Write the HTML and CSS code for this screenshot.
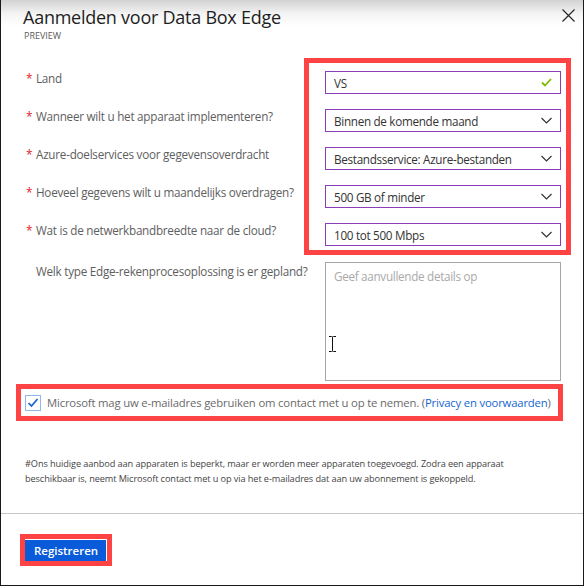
FILE: index.html
```html
<!DOCTYPE html>
<html lang="nl">
<head>
<meta charset="utf-8">
<title>Aanmelden voor Data Box Edge</title>
<link rel="stylesheet" href="styles.css">
</head>
<body>
<div class="panel">
  <header class="head">
    <div class="head-text">
      <h1 class="title">Aanmelden voor Data Box Edge</h1>
      <div class="sub">PREVIEW</div>
    </div>
    <button class="close" aria-label="Sluiten">
      <svg width="13" height="13" viewBox="0 0 13 13"><path d="M0.5 0.5L12.5 12.5M12.5 0.5L0.5 12.5" stroke="#222" stroke-width="1.1" fill="none"/></svg>
    </button>
  </header>

  <main class="content">
    <div class="top-form">
      <div class="labels">
        <div class="lbl"><span class="req">*</span>Land</div>
        <div class="lbl"><span class="req">*</span>Wanneer wilt u het apparaat implementeren?</div>
        <div class="lbl"><span class="req">*</span>Azure-doelservices voor gegevensoverdracht</div>
        <div class="lbl"><span class="req">*</span>Hoeveel gegevens wilt u maandelijks overdragen?</div>
        <div class="lbl"><span class="req">*</span>Wat is de netwerkbandbreedte naar de cloud?</div>
      </div>
      <div class="hl fields">
        <div class="field"><span>VS</span>
          <svg class="ico" width="11" height="9" viewBox="0 0 11 9"><path d="M1 4.5L4 7.5L10 1" stroke="#7fba00" stroke-width="1.8" fill="none"/></svg>
        </div>
        <div class="field"><span>Binnen de komende maand</span>
          <svg class="ico" width="11" height="7" viewBox="0 0 11 7"><path d="M0.5 1L5.5 6L10.5 1" stroke="#333" stroke-width="1.2" fill="none"/></svg>
        </div>
        <div class="field"><span>Bestandsservice: Azure-bestanden</span>
          <svg class="ico" width="11" height="7" viewBox="0 0 11 7"><path d="M0.5 1L5.5 6L10.5 1" stroke="#333" stroke-width="1.2" fill="none"/></svg>
        </div>
        <div class="field"><span>500 GB of minder</span>
          <svg class="ico" width="11" height="7" viewBox="0 0 11 7"><path d="M0.5 1L5.5 6L10.5 1" stroke="#333" stroke-width="1.2" fill="none"/></svg>
        </div>
        <div class="field"><span>100 tot 500 Mbps</span>
          <svg class="ico" width="11" height="7" viewBox="0 0 11 7"><path d="M0.5 1L5.5 6L10.5 1" stroke="#333" stroke-width="1.2" fill="none"/></svg>
        </div>
      </div>
    </div>

    <div class="ta-row">
      <div class="lbl plain">Welk type Edge-rekenprocesoplossing is er gepland?</div>
      <div class="ta">
        <span class="placeholder">Geef aanvullende details op</span>
        <svg class="cursor" width="7" height="16" viewBox="0 0 7 16"><path d="M0 0.5H2.5Q3.5 0.5 3.5 1.5V14.5Q3.5 15.5 2.5 15.5H0M7 0.5H4.5Q3.5 0.5 3.5 1.5M3.5 14.5Q3.5 15.5 4.5 15.5H7" stroke="#111" stroke-width="1" fill="none"/></svg>
      </div>
    </div>

    <div class="hl consent">
      <svg class="cb" width="16" height="16" viewBox="0 0 16 16"><rect x="0.5" y="0.5" width="15" height="15" fill="#fff" stroke="#1a73d9" stroke-width="1" stroke-dasharray="1 1"/><path d="M3.5 8L6.5 11L12.5 4" stroke="#1463d0" stroke-width="1.7" fill="none"/></svg>
      <span class="consent-text">Microsoft mag uw e-mailadres gebruiken om contact met u op te nemen. (<a class="link" href="#">Privacy en voorwaarden</a>)</span>
    </div>

    <p class="note">#Ons huidige aanbod aan apparaten is beperkt, maar er worden meer apparaten toegevoegd. Zodra een apparaat beschikbaar is, neemt Microsoft contact met u op via het e-mailadres dat aan uw abonnement is gekoppeld.</p>
  </main>

  <footer class="foot">
    <span class="hl btn-hl"><button class="btn">Registreren</button></span>
  </footer>
</div>
</body>
</html>
```

FILE: styles.css
```css
* { box-sizing: border-box; }
html, body { margin: 0; padding: 0; background: #fff; }
body { font-family: "Open Sans", "Noto Sans", sans-serif; color: #333; }

.panel {
  width: 584px;
  height: 586px;
  border: 1px solid #1a1a1a;
  border-top: none;
  display: flex;
  flex-direction: column;
  background: #fff;
}

.head {
  display: flex;
  justify-content: space-between;
  align-items: flex-start;
  padding: 5px 8px 0 22px;
  height: 58px;
  background: linear-gradient(to bottom, #d2d2d2 0px, #f4f4f4 14px, #ffffff 26px);
}
.title {
  margin: 0;
  font-size: 18px;
  font-weight: 400;
  line-height: 24px;
  color: #1e1e1e;
  letter-spacing: -0.25px;
}
.sub {
  font-size: 9px;
  line-height: 12px;
  color: #5a5a5a;
  margin-top: 1px;
  margin-left: 1px;
}
.close {
  border: 0;
  background: transparent;
  padding: 0;
  margin-top: 4px;
  width: 13px;
  height: 13px;
  display: block;
}
.close svg { display: block; }

.content {
  flex: 1;
  padding: 0 0 0 24px;
}

.top-form { display: flex; }
.labels {
  width: 279px;
  padding-top: 9px;
  display: flex;
  flex-direction: column;
  gap: 15px;
}
.lbl {
  height: 23px;
  font-size: 11.7px;
  letter-spacing: -0.25px;
  line-height: 23px;
  color: #5e5e5e;
  white-space: nowrap;
}
.req {
  color: #e3222b;
  display: inline-block;
  width: 11px;
  padding-left: 1px;
  font-size: 12px;
}
.hl { border: 5px solid #fd4343; }
.fields {
  width: 267px;
  padding: 8px 5px 4px 16px;
  display: flex;
  flex-direction: column;
  gap: 15px;
}
.field {
  height: 23px;
  border: 1px solid #8b3eb7;
  display: flex;
  align-items: center;
  justify-content: space-between;
  padding: 0 8px 0 8px;
  font-size: 11.7px;
  letter-spacing: -0.3px;
  color: #333;
  white-space: nowrap;
}
.field .ico { display: block; flex-shrink: 0; }

.ta-row {
  display: flex;
  margin-top: 7px;
}
.plain { width: 300px; padding-left: 11px; height: auto; line-height: 18px; }
.ta {
  position: relative;
  width: 236px;
  height: 119px;
  border: 1px solid #a6a6a6;
  padding: 1px 8px;
}
.placeholder { font-size: 11.7px; letter-spacing: -0.3px; line-height: 18px; color: #a9a9a9; }
.cursor { position: absolute; left: 3px; top: 73px; }

.consent {
  margin: 3px 0 0 -9px;
  width: 547px;
  height: 37px;
  display: flex;
  align-items: center;
  padding: 0 0 0 4px;
  gap: 6px;
}
.cb { display: block; flex-shrink: 0; }
.consent-text { font-size: 11.3px; color: #6a6a6a; white-space: nowrap; letter-spacing: -0.17px; }
.link { color: #1467d3; text-decoration: none; }

.note {
  margin: 35px 0 0;
  font-size: 9.2px;
  letter-spacing: -0.1px;
  line-height: 15px;
  color: #444;
  width: 500px;
}

.foot {
  border-top: 1px solid #c6c6c6;
  height: 72px;
  padding: 20px 0 0 19px;
}
.btn-hl { display: inline-block; }
.btn {
  display: block;
  width: 82px;
  height: 22px;
  border: 0;
  box-shadow: inset -1px 1px 0 #ffffff;
  background: #0a5bd9;
  color: #fff;
  font-family: "Open Sans", sans-serif;
  font-size: 11.5px;
  font-weight: 600;
  padding: 0;
}
```
